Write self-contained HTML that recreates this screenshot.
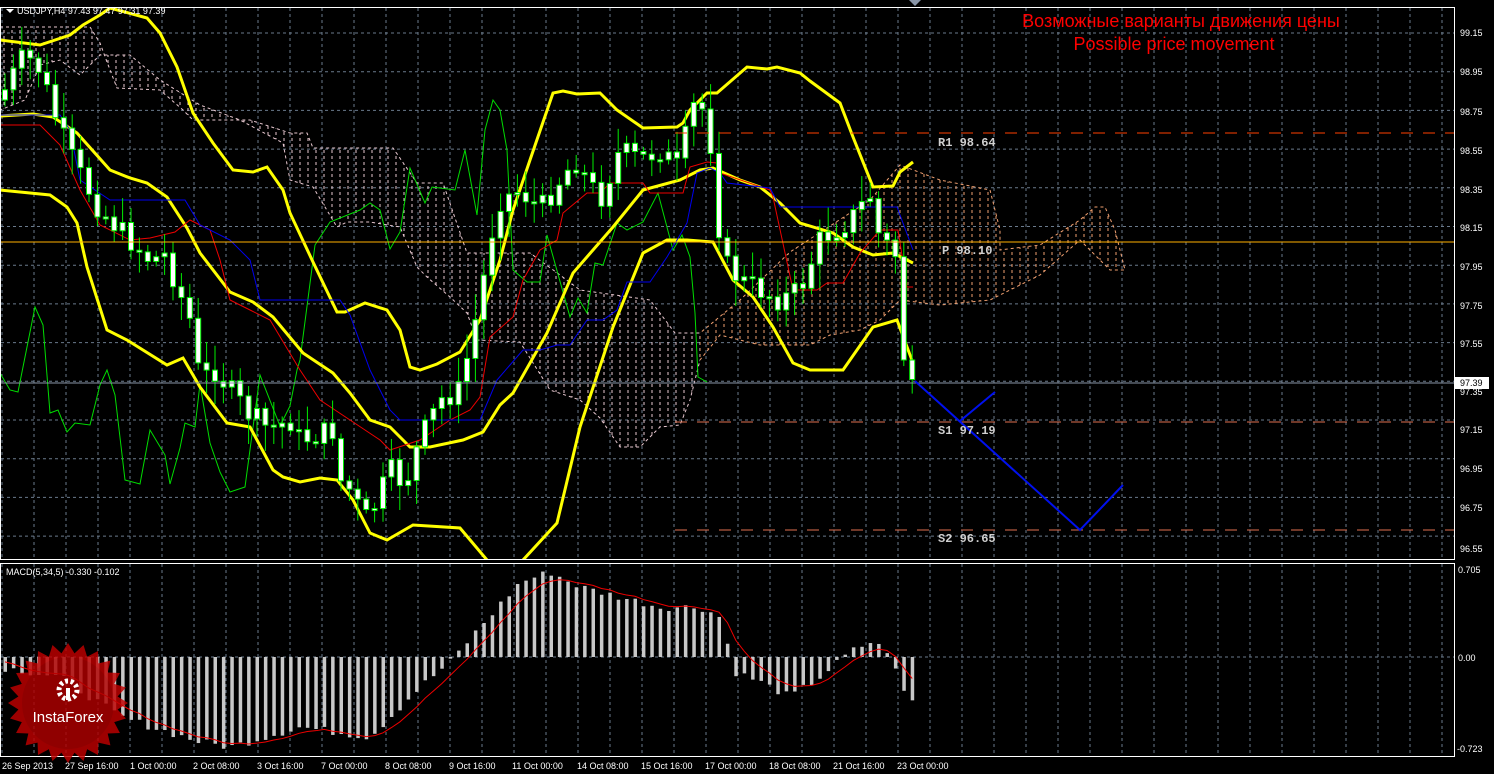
<!DOCTYPE html>
<html><head><meta charset="utf-8">
<style>
html,body{margin:0;padding:0;background:#000;width:1494px;height:774px;overflow:hidden}
svg{display:block}
.ax{font-family:"Liberation Sans",sans-serif;font-size:9px;fill:#fff}
.lv{font-family:"Liberation Mono",monospace;font-size:12px;font-weight:bold;fill:#d0d0d0}
</style></head><body>
<svg id="s" width="1494" height="774" viewBox="0 0 1494 774" xmlns="http://www.w3.org/2000/svg">
<defs>
<pattern id="hp" width="8" height="6" patternUnits="userSpaceOnUse"><line x1="4" y1="0" x2="4" y2="3" stroke="#f0a070" stroke-width="1"/></pattern>
<pattern id="hw" width="8" height="6" patternUnits="userSpaceOnUse"><line x1="4" y1="0" x2="4" y2="3" stroke="#e8c8d0" stroke-width="1"/></pattern>
<clipPath id="cm"><rect x="1" y="8" width="1453" height="551"/></clipPath>
<clipPath id="cl"><rect x="0" y="8" width="700" height="551"/></clipPath>
<clipPath id="cr"><rect x="700" y="8" width="754" height="551"/></clipPath>
<clipPath id="cd"><rect x="1" y="563" width="1453" height="193"/></clipPath>
</defs>
<rect width="1494" height="774" fill="#000"/>
<g id="grid"></g>
<g clip-path="url(#cm)">
<polygon id="cloudL" clip-path="url(#cl)" fill="url(#hw)" stroke="#e8c8d0" stroke-dasharray="3,3" stroke-width="1"/>
<polygon id="cloudR" clip-path="url(#cr)" fill="url(#hp)" stroke="#f0a070" stroke-dasharray="3,3" stroke-width="1"/>
<polyline id="chik" fill="none" stroke="#00dd00" stroke-width="1"/>
<polyline fill="none" stroke="#ffff00" stroke-width="3" points="0,40 40,45 70,35 83,25 100,15 110,8 147,18 160,33 177,67 193,113 213,143 233,170 253,172 267,167 283,190 290,213 313,262 337,312 345,312 365,303 387,310 400,330 410,367 420,370 437,364 460,352 480,320 500,260 513,210 530,160 553,93 563,91 577,94 600,93 617,110 643,128 677,127 683,123 690,110 707,93 717,93 747,67 767,69 777,67 800,73 810,81 840,103 853,137 873,187 893,186 900,172 913,162"/>
<polyline fill="none" stroke="#ffff00" stroke-width="3" points="0,190 50,195 67,207 77,223 87,267 107,330 127,340 167,365 183,358 200,387 227,423 250,427 273,470 283,477 300,482 320,478 337,480 353,500 370,533 387,540 413,525 460,528 487,560"/>
<polyline fill="none" stroke="#ffff00" stroke-width="3" points="515,572 523,560 557,523 580,427 613,327 643,253 667,240 687,240 713,242 733,280 753,297 773,327 793,363 810,370 843,370 873,327 897,320 913,363"/>
<polyline fill="none" stroke="#ffff00" stroke-width="3" points="0,116 33,114 53,117 77,133 110,170 130,178 147,183 167,197 187,228 200,253 230,292 253,302 273,317 303,353 333,373 350,393 370,420 390,427 410,447 430,447 463,440 483,432 500,405 513,393 547,333 573,273 613,227 643,190 680,180 700,170 713,168 740,180 760,187 780,203 800,223 833,233 853,247 873,255 893,253 913,263"/>
<polyline fill="none" stroke="#ee0000" stroke-width="1" points="0,125 40,125 60,145 80,190 100,225 130,240 150,238 175,232 190,220 200,225 210,230 220,260 230,300 250,310 270,320 300,370 320,400 350,420 365,430 380,440 390,450 420,440 450,420 470,410 480,397 490,337 513,317 523,280 540,250 557,240 563,213 587,193 600,193 610,183 643,183 650,193 683,193 690,167 707,162 717,163 720,173 770,190 773,197 793,290 817,290 827,283 843,283 860,253 880,230 898,230 907,287 913,287"/>
<polyline fill="none" stroke="#0000ee" stroke-width="1" points="0,115 60,115 70,130 80,180 110,200 185,200 200,225 230,240 250,260 260,300 320,300 340,300 350,315 370,370 390,410 400,420 460,420 480,420 497,380 523,350 540,350 557,345 570,345 587,320 603,320 617,310 627,282 650,282 667,257 680,235 687,223 697,173 710,168 720,173 727,183 770,188 780,207 897,207 913,250"/>
<g id="candles"></g>
<line x1="0" y1="383" x2="1454" y2="383" stroke="#8a96a8" stroke-width="1"/>
<line x1="0" y1="242" x2="1454" y2="242" stroke="#ffb000" stroke-width="1"/>
<line x1="675" y1="133" x2="1454" y2="133" stroke="#ff4000" stroke-width="1" stroke-dasharray="12,10"/>
<line x1="675" y1="422" x2="1454" y2="422" stroke="#e07050" stroke-width="1" stroke-dasharray="12,10"/>
<line x1="675" y1="530" x2="1454" y2="530" stroke="#e07050" stroke-width="1" stroke-dasharray="12,10"/>
<polyline fill="none" stroke="#0010ee" stroke-width="2" points="915,381 1080,530 1123,485"/>
<polyline fill="none" stroke="#0010ee" stroke-width="2" points="960,421 995,392"/>
</g>
<text class="lv" x="938" y="146">R1 98.64</text>
<text class="lv" x="942" y="254">P 98.10</text>
<text class="lv" x="938" y="434">S1 97.19</text>
<text class="lv" x="938" y="542">S2 96.65</text>
<text x="1181" y="27" text-anchor="middle" font-family="Liberation Sans,DejaVu Sans,sans-serif" font-size="18" fill="#ff0000">Возможные варианты движения цены</text>
<text x="1174" y="50" text-anchor="middle" font-family="Liberation Sans,sans-serif" font-size="18" fill="#ff0000">Possible price movement</text>
<g clip-path="url(#cd)">
<g id="hist"></g>
<polyline id="sig" fill="none" stroke="#ee0000" stroke-width="1"/>
</g>
<rect x="0.5" y="7.5" width="1454" height="552" fill="none" stroke="#fff" stroke-width="1"/>
<rect x="0.5" y="563.5" width="1454" height="193" fill="none" stroke="#fff" stroke-width="1"/>
<polygon points="909,0 921,0 915,6" fill="#8a96a8"/>
<polygon points="6,9 14,9 10,13" fill="#fff"/>
<text class="ax" x="17" y="14">USDJPY,H4  97.43 97.47 97.31 97.39</text>
<text class="ax" x="6" y="575">MACD(5,34,5) -0.330 -0.102</text>
<g class="ax">
<text x="1460" y="36">99.15</text><text x="1460" y="75">98.95</text><text x="1460" y="115">98.75</text><text x="1460" y="154">98.55</text><text x="1460" y="193">98.35</text><text x="1460" y="231">98.15</text><text x="1460" y="270">97.95</text><text x="1460" y="309">97.75</text><text x="1460" y="347">97.55</text><text x="1460" y="395">97.35</text><text x="1460" y="433">97.15</text><text x="1460" y="472">96.95</text><text x="1460" y="511">96.75</text><text x="1460" y="552">96.55</text>
<text x="1458" y="573">0.705</text><text x="1458" y="661">0.00</text><text x="1457" y="752">-0.723</text>
</g>
<rect x="1455" y="377" width="34" height="12" fill="#fff"/>
<text x="1460" y="386" font-family="Liberation Sans,sans-serif" font-size="9" fill="#000">97.39</text>
<g class="ax">
<text x="2" y="769">26 Sep 2013</text><text x="65" y="769">27 Sep 16:00</text><text x="130" y="769">1 Oct 00:00</text><text x="193" y="769">2 Oct 08:00</text><text x="257" y="769">3 Oct 16:00</text><text x="321" y="769">7 Oct 00:00</text><text x="385" y="769">8 Oct 08:00</text><text x="449" y="769">9 Oct 16:00</text><text x="512" y="769">11 Oct 00:00</text><text x="577" y="769">14 Oct 08:00</text><text x="641" y="769">15 Oct 16:00</text><text x="705" y="769">17 Oct 00:00</text><text x="769" y="769">18 Oct 08:00</text><text x="833" y="769">21 Oct 16:00</text><text x="897" y="769">23 Oct 00:00</text>
</g>
<g opacity="0.82">
<polygon id="star" fill="#c00000"/>
<circle cx="68" cy="703" r="46" fill="#b00000"/>
</g>
<g fill="#fff">
<circle cx="68" cy="690" r="9" fill="none" stroke="#fff" stroke-width="5" stroke-dasharray="3,2.6"/>
<rect x="66" y="688" width="4" height="12"/>
</g>
<text x="68" y="722" text-anchor="middle" font-family="Liberation Sans,sans-serif" font-size="15" fill="#fff">InstaForex</text>
</svg>
<script>
(function(){
var NS="http://www.w3.org/2000/svg";
function el(t,a,p){var e=document.createElementNS(NS,t);for(var k in a)e.setAttribute(k,a[k]);p.appendChild(e);return e;}
var g=document.getElementById('grid');
for(var x=2;x<1454;x+=32){el('line',{x1:x,y1:8,x2:x,y2:559,stroke:'#6a7a8c','stroke-dasharray':'3,3'},g);el('line',{x1:x,y1:564,x2:x,y2:756,stroke:'#6a7a8c','stroke-dasharray':'3,3'},g);}
for(var i=0;i<14;i++){var y=33+i*38.7;el('line',{x1:1,y1:y,x2:1454,y2:y,stroke:'#6a7a8c','stroke-dasharray':'3,3'},g);}
el('line',{x1:1,y1:657,x2:1454,y2:657,stroke:'#6a7a8c','stroke-dasharray':'3,3'},g);
var cloud="0,27 90,27 100,43 107,62 117,88 160,90 183,110 193,120 250,120 290,133 307,133 313,148 393,148 417,183 443,183 467,253 530,253 560,275 580,290 650,300 675,333 700,333 740,300 790,252 870,200 900,165 940,180 990,190 1000,230 1000,250 1040,245 1080,220 1095,207 1105,207 1115,230 1125,270 1110,270 1080,240 1040,275 990,300 940,305 900,300 880,320 860,330 830,335 810,345 760,345 720,335 700,360 690,400 680,425 660,427 640,447 620,447 600,418 580,400 550,390 520,342 477,340 467,313 450,297 427,277 417,267 400,227 370,222 347,222 337,227 313,187 290,180 283,143 240,120 200,105 160,80 130,55 100,55 80,75 60,60 40,65 25,100 0,110";
document.getElementById('cloudL').setAttribute('points',cloud);document.getElementById('cloudR').setAttribute('points',cloud);
function interp(pts,x){for(var i=0;i<pts.length-1;i++){if(x>=pts[i][0]&&x<=pts[i+1][0]){var t=(x-pts[i][0])/(pts[i+1][0]-pts[i][0]);return pts[i][1]+t*(pts[i+1][1]-pts[i][1]);}}return pts[pts.length-1][1];}
var seed=7;function rnd(){seed=(seed*9301+49297)%233280;return seed/233280;}
var cp=[[0,100],[10,80],[25,55],[40,70],[60,130],[75,165],[100,210],[130,240],[150,260],[165,255],[190,320],[200,380],[215,370],[230,390],[250,415],[270,430],[290,420],[300,440],[335,430],[340,480],[350,490],[365,520],[375,505],[390,470],[405,485],[420,440],[440,400],[460,390],[480,300],[490,240],[500,200],[520,190],[540,210],[560,180],[575,160],[600,200],[620,150],[640,160],[660,150],[680,170],[690,110],[700,100],[712,150],[722,260],[740,280],[760,290],[780,300],[800,290],[820,240],[850,220],[870,195],[880,240],[895,250],[905,375],[913,380]];
var c=document.getElementById('candles');var prev=interp(cp,0);
for(var x=5;x<=913;x+=8.4){var cl=interp(cp,x)+(rnd()-0.5)*24;if(x>900)cl=interp(cp,x);var op=prev;var tp=Math.min(op,cl),bt=Math.max(op,cl);
el('line',{x1:x,y1:tp-4-rnd()*22,x2:x,y2:bt+4+rnd()*22,stroke:'#00ee00','stroke-width':1},c);
el('rect',{x:x-2.5,y:tp,width:5,height:Math.max(2,bt-tp),fill:'#fff',stroke:'#00ee00','stroke-width':1},c);prev=cl;}
var ch=[[0,373],[10,390],[18,392],[35,307],[43,325],[50,413],[58,410],[67,432],[75,423],[90,425],[100,385],[107,370],[115,395],[125,480],[140,484],[150,430],[165,455],[170,484],[180,448],[185,423],[195,427],[200,384],[210,443],[220,472],[230,492],[245,487],[260,375],[280,426],[290,406],[297,370],[300,360],[315,245],[330,222],[360,210],[370,203],[380,210],[390,249],[400,232],[410,168],[425,203],[432,187],[455,190],[465,150],[477,215],[485,130],[493,100],[500,110],[507,150],[513,270],[527,282],[540,282],[547,235],[570,317],[578,298],[587,313],[595,263],[603,265],[617,223],[627,230],[643,222],[658,193],[673,250],[682,235],[690,257],[695,313],[698,377],[707,382]];
var s="";for(var i=0;i<ch.length;i++){s+=ch[i][0]+","+ch[i][1]+" ";}document.getElementById('chik').setAttribute('points',s);
var mp=[[0,-10],[60,-20],[120,-60],[200,-85],[230,-90],[300,-70],[370,-80],[420,-30],[450,-5],[480,30],[520,75],[550,85],[580,70],[620,60],[660,50],[700,50],[720,40],[735,-15],[760,-25],[790,-40],[820,-20],[850,5],[870,15],[890,5],[900,-30],[913,-45]];
var h=document.getElementById('hist'),sp="";var sv=0;
for(var x=5;x<=913;x+=8.4){var v=interp(mp,x)+(rnd()-0.5)*8;el('rect',{x:x-1.5,y:v>0?657-v:657,width:3.5,height:Math.abs(v),fill:'#c8c8c8'},h);sv=sv+(v-sv)*0.33;sp+=x+","+(657-sv)+" ";}
document.getElementById('sig').setAttribute('points',sp);
var st="";for(var i=0;i<48;i++){var a=i*Math.PI/24,r=i%2?50:60;st+=(68+r*Math.cos(a))+","+(703+r*Math.sin(a))+" ";}document.getElementById('star').setAttribute('points',st);
})();
</script>
</body></html>
